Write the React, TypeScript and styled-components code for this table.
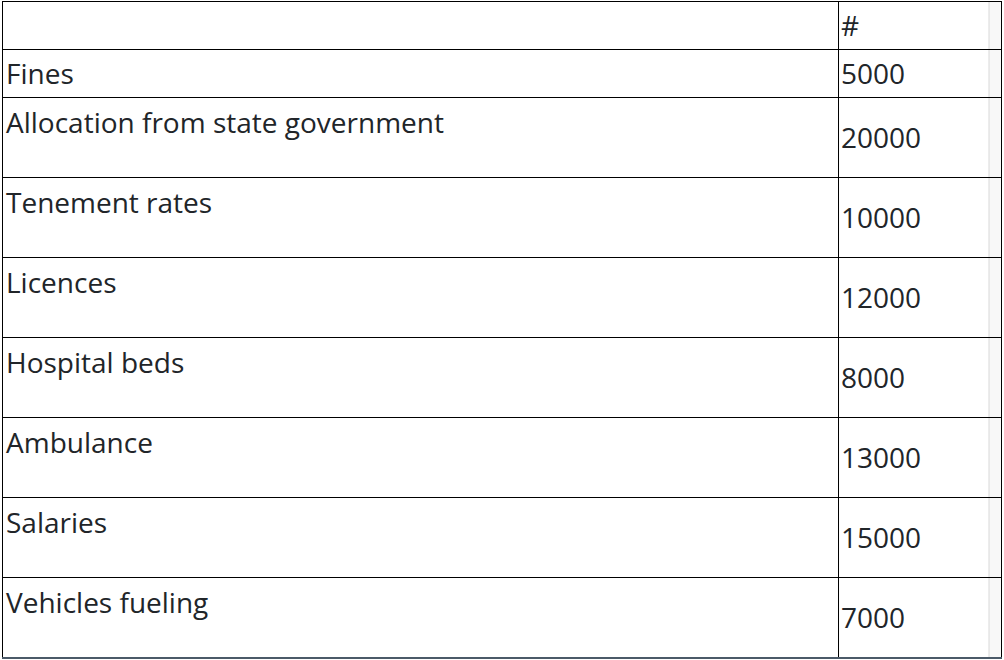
import React from "react";
import styled, { createGlobalStyle } from "styled-components";

const Global = createGlobalStyle`
  html, body { margin: 0; padding: 0; background: #fff; }
  body { font-family: "Open Sans", "Noto Sans", sans-serif; }
`;

const Page = styled.div`
  padding: 1px 3px 0 2px;
`;

const Table = styled.table`
  width: 1000px;
  border-collapse: collapse;
  font-family: "Open Sans", "Noto Sans", sans-serif;
  font-size: 28px;
  color: #212529;
  border-top: 1px solid #4b5a68;
  border-bottom: 2px solid #4b5a68;
`;

const Row = styled.tr<{ $tall?: boolean }>`
  height: ${(p) => (p.$tall ? 80 : 48)}px;
`;

const LabelCell = styled.td<{ $top?: boolean }>`
  border: 1px solid #000;
  padding: 0 3px;
  vertical-align: ${(p) => (p.$top ? "top" : "middle")};
  line-height: 33px;
  ${(p) => (p.$top ? "padding-top: 8px;" : "")}
`;

const ValueCell = styled.td`
  width: 158px;
  border: 1px solid #000;
  padding: 0 2px;
  vertical-align: middle;
  line-height: 33px;
  background: linear-gradient(
    to right,
    #fff calc(100% - 13px),
    #d8d8d8 calc(100% - 13px),
    #d8d8d8 calc(100% - 12px),
    #f8f8f8 calc(100% - 12px)
  );
`;

const rows: [string, string][] = [
  ["Fines", "5000"],
  ["Allocation from state government", "20000"],
  ["Tenement rates", "10000"],
  ["Licences", "12000"],
  ["Hospital beds", "8000"],
  ["Ambulance", "13000"],
  ["Salaries", "15000"],
  ["Vehicles fueling", "7000"],
];

export default function App() {
  return (
    <>
      <Global />
      <Page>
        <Table>
          <tbody>
            <Row>
              <LabelCell></LabelCell>
              <ValueCell>#</ValueCell>
            </Row>
            {rows.map(([label, value], i) => (
              <Row key={label} $tall={i > 0}>
                <LabelCell $top={i > 0}>{label}</LabelCell>
                <ValueCell>{value}</ValueCell>
              </Row>
            ))}
          </tbody>
        </Table>
      </Page>
    </>
  );
}
